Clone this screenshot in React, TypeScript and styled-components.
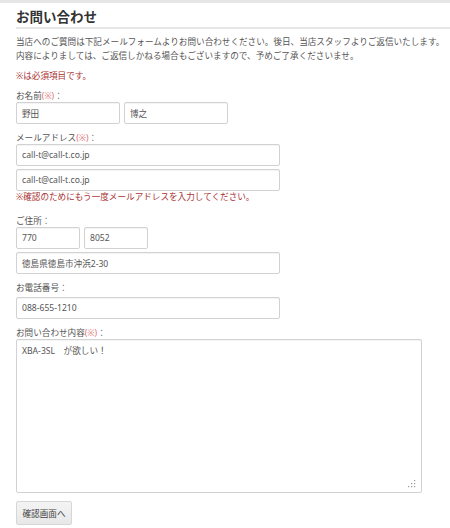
import styled, { createGlobalStyle } from 'styled-components';

const GlobalStyle = createGlobalStyle`
  html, body {
    margin: 0;
    padding: 0;
    background: #fff;
  }
  body {
    font-family: 'Noto Sans', 'Noto Sans CJK JP', sans-serif;
    color: #555;
  }
`;

const TopBar = styled.div`
  height: 3px;
  background: #e6e6e6;
`;

const Page = styled.main`
  padding-left: 16px;
`;

const Title = styled.h1`
  margin: 0;
  padding-top: 5px;
  font-size: 13.5px;
  line-height: 19px;
  font-weight: 700;
  color: #333;
  border-bottom: 2px solid #e6e6e6;
`;

const Intro = styled.p`
  margin: 6px 0 0;
  font-size: 8.6px;
  line-height: 14px;
  padding-right: 4px;
`;

const Note = styled.p<{ $top?: number }>`
  margin: ${(p) => p.$top ?? 0}px 0 0;
  font-size: 8.6px;
  line-height: 12px;
  color: #a83232;
`;

const Field = styled.div<{ $top?: number }>`
  margin-top: ${(p) => p.$top ?? 8}px;
`;

const Label = styled.label`
  display: block;
  font-size: 8.6px;
  line-height: 12px;
  color: #555;
`;

const Req = styled.span`
  color: #e07070;
`;

const Row = styled.div`
  display: flex;
  gap: 4px;
`;

const Stack = styled.div`
  display: flex;
  flex-direction: column;
  gap: 3px;
`;

const Input = styled.input<{ $w: number }>`
  box-sizing: border-box;
  width: ${(p) => p.$w}px;
  height: 22px;
  margin: 0;
  padding: 0 5px;
  border: 1px solid #d2d2d2;
  border-radius: 2px;
  box-shadow: inset 0 1px 1px rgba(0, 0, 0, 0.05);
  font-family: 'Noto Sans', 'Noto Sans CJK JP', sans-serif;
  font-size: 8.6px;
  color: #555;
  background: #fff;
  outline: none;
`;

const AreaWrap = styled.div`
  position: relative;
  width: 406px;
  height: 154px;
`;

const Area = styled.textarea`
  box-sizing: border-box;
  display: block;
  width: 100%;
  height: 100%;
  margin: 0;
  padding: 5px 5px;
  border: 1px solid #d2d2d2;
  border-radius: 2px;
  box-shadow: inset 0 1px 1px rgba(0, 0, 0, 0.05);
  font-family: 'Noto Sans', 'Noto Sans CJK JP', sans-serif;
  font-size: 8.6px;
  line-height: 12px;
  color: #555;
  resize: none;
  outline: none;
`;

const Grip = styled.svg`
  position: absolute;
  right: 6px;
  bottom: 4px;
  width: 10px;
  height: 10px;
`;

const Button = styled.button`
  margin-top: 8px;
  box-sizing: border-box;
  width: 56px;
  height: 24px;
  padding: 0;
  border: 1px solid #d6d6d6;
  border-radius: 2px;
  background: linear-gradient(#f4f4f4, #e8e8e8);
  font-family: 'Noto Sans', 'Noto Sans CJK JP', sans-serif;
  font-size: 8.6px;
  color: #444;
`;

export default function App() {
  return (
    <>
      <GlobalStyle />
      <TopBar />
      <Page>
        <Title>お問い合わせ</Title>
        <Intro>
          当店へのご質問は下記メールフォームよりお問い合わせください。後日、当店スタッフよりご返信いたします。
          内容によりましては、ご返信しかねる場合もございますので、予めご了承くださいませ。
        </Intro>
        <Note $top={7}>※は必須項目です。</Note>

        <Field>
          <Label>
            お名前<Req>(※)</Req>：
          </Label>
          <Row>
            <Input $w={104} defaultValue="野田" />
            <Input $w={104} defaultValue="博之" />
          </Row>
        </Field>

        <Field>
          <Label>
            メールアドレス<Req>(※)</Req>：
          </Label>
          <Stack>
            <Input $w={264} defaultValue="call-t@call-t.co.jp" />
            <Input $w={264} defaultValue="call-t@call-t.co.jp" />
          </Stack>
        </Field>
        <Note>※確認のためにもう一度メールアドレスを入力してください。</Note>

        <Field $top={12}>
          <Label>ご住所：</Label>
          <Stack>
            <Row>
              <Input $w={64} defaultValue="770" />
              <Input $w={64} defaultValue="8052" />
            </Row>
            <Input $w={264} defaultValue="徳島県徳島市沖浜2-30" />
          </Stack>
        </Field>

        <Field>
          <Label>お電話番号：</Label>
          <Input $w={264} defaultValue="088-655-1210" />
        </Field>

        <Field>
          <Label>
            お問い合わせ内容<Req>(※)</Req>：
          </Label>
          <AreaWrap>
            <Area defaultValue="XBA-3SL　が欲しい！" />
            <Grip viewBox="0 0 10 10">
              {[
                [8, 1],
                [5, 4],
                [8, 4],
                [2, 7],
                [5, 7],
                [8, 7],
              ].map(([x, y]) => (
                <rect key={`${x}-${y}`} x={x} y={y} width="1.2" height="1.2" fill="#9a9a9a" />
              ))}
            </Grip>
          </AreaWrap>
        </Field>

        <Button type="button">確認画面へ</Button>
      </Page>
    </>
  );
}
